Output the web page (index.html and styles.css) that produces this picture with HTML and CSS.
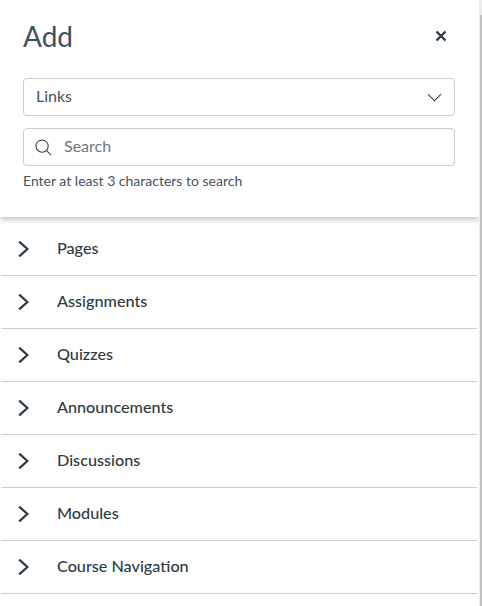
FILE: index.html
```html
<!DOCTYPE html>
<html lang="en">

<head>
    <title>Add</title>
    <meta charset="utf-8" />
    <link rel="stylesheet" href="styles.css">
</head>

<body>
    <div class="tray">
        <div class="tray-header">
            <div class="title-row">
                <h1>Add</h1>
                <button class="close" aria-label="Close">
                    <svg viewBox="0 0 12 12" width="12" height="12">
                        <path d="M1.5 1.5l9 9M10.5 1.5l-9 9" />
                    </svg>
                </button>
            </div>
            <div class="field select-field">
                <span>Links</span>
                <svg class="caret" viewBox="0 0 16 9" width="15" height="9">
                    <path d="M1 1l7 7 7-7" />
                </svg>
            </div>
            <div class="field search-field">
                <svg class="search-icon" viewBox="0 0 18 18" width="17" height="17">
                    <circle cx="7.5" cy="7.5" r="6.5" />
                    <path d="M12.3 12.3l4.9 4.9" />
                </svg>
                <span>Search</span>
            </div>
            <p class="hint">Enter at least 3 characters to search</p>
        </div>
        <ul class="groups">
            <li><svg viewBox="0 0 11 16" width="11" height="16"><path d="M1.2 .6l8.2 7.4-8.2 7.4" /></svg>Pages</li>
            <li><svg viewBox="0 0 11 16" width="11" height="16"><path d="M1.2 .6l8.2 7.4-8.2 7.4" /></svg>Assignments</li>
            <li><svg viewBox="0 0 11 16" width="11" height="16"><path d="M1.2 .6l8.2 7.4-8.2 7.4" /></svg>Quizzes</li>
            <li><svg viewBox="0 0 11 16" width="11" height="16"><path d="M1.2 .6l8.2 7.4-8.2 7.4" /></svg>Announcements</li>
            <li><svg viewBox="0 0 11 16" width="11" height="16"><path d="M1.2 .6l8.2 7.4-8.2 7.4" /></svg>Discussions</li>
            <li><svg viewBox="0 0 11 16" width="11" height="16"><path d="M1.2 .6l8.2 7.4-8.2 7.4" /></svg>Modules</li>
            <li><svg viewBox="0 0 11 16" width="11" height="16"><path d="M1.2 .6l8.2 7.4-8.2 7.4" /></svg>Course Navigation</li>
        </ul>
    </div>
    <div class="rail">
        <div class="thumb"></div>
    </div>
</body>

</html>
```

FILE: styles.css
```css
html,
body {
    height: 100%;
}

body {
    display: flex;
    margin: 0;
    overflow: hidden;
    background: #fff;
    font-family: Lato, "Open Sans", sans-serif;
    color: #2d3b45;
}

.tray {
    width: 479px;
    height: 100%;
}

.rail {
    box-sizing: border-box;
    width: 3px;
    padding: 15px 0 0 1px;
    background: #ececec;
}

.thumb {
    height: 100%;
    background: #c0c0c0;
}

.tray-header {
    height: 217px;
    padding: 0 24px 0 23px;
    box-sizing: border-box;
    box-shadow: 0 2px 6px rgba(0, 0, 0, 0.28);
}

.title-row {
    display: flex;
    justify-content: space-between;
    align-items: center;
    height: 72px;
}

h1 {
    margin: 0;
    font-size: 28px;
    font-weight: 400;
    line-height: 72px;
    color: #414e58;
}

.close {
    display: flex;
    margin-right: 8px;
    padding: 0;
    border: 0;
    background: none;
}

.close path {
    fill: none;
    stroke: #2d3b45;
    stroke-width: 2.4;
}

.field {
    display: flex;
    align-items: center;
    box-sizing: border-box;
    height: 38px;
    padding-bottom: 3px;
    border: 1px solid #c7cdd1;
    border-radius: 4px;
    font-size: 16px;
}

.select-field {
    justify-content: space-between;
    margin-top: 6px;
    padding-left: 12px;
    padding-right: 12px;
    color: #46525c;
}

.caret {
    margin-top: 3px;
}

.caret path {
    fill: none;
    stroke: #2d3b45;
    stroke-width: 1.1;
}

.search-field {
    margin-top: 12px;
    padding-left: 11px;
    padding-right: 11px;
    color: #6b7780;
}

.search-icon {
    margin-top: 3px;
    margin-right: 12px;
}

.search-icon circle,
.search-icon path {
    fill: none;
    stroke: #2d3b45;
    stroke-width: 1.1;
}

.hint {
    margin: 6px 0 0;
    font-size: 14px;
    line-height: 18px;
    color: #46525c;
}

.groups {
    margin: 6px 0 0;
    padding: 0;
    list-style: none;
}

.groups li {
    display: flex;
    align-items: center;
    box-sizing: border-box;
    height: 53px;
    margin-left: 1px;
    margin-right: 2px;
    padding: 0 0 4px 17px;
    border-bottom: 1px solid #c7cdd1;
    font-size: 16.2px;
    font-weight: 500;
}

.groups svg {
    margin-top: 3px;
    margin-right: 28px;
}

.groups path {
    fill: none;
    stroke: #2d3b45;
    stroke-width: 2.3;
}
```
